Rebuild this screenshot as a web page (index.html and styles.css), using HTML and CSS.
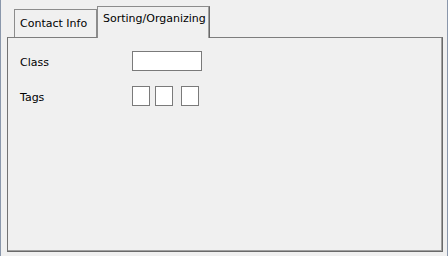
FILE: index.html
```html
<!DOCTYPE html>
<html>
<head>
<meta charset="utf-8">
<link rel="stylesheet" href="styles.css">
</head>
<body>
<div class="window">
  <div class="tabs">
    <div class="tab">Contact Info</div>
    <div class="tab tab-active">Sorting/Organizing</div>
  </div>
  <div class="panel">
    <div class="form">
      <div class="label">Class</div>
      <div class="field"><div class="box box-wide"></div></div>
      <div class="label">Tags</div>
      <div class="field tags">
        <div class="box box-tag"></div>
        <div class="box box-tag"></div>
        <div class="box box-tag box-last"></div>
      </div>
    </div>
  </div>
</div>
</body>
</html>
```
FILE: styles.css
```css
html, body {
  margin: 0;
  padding: 0;
  background: #f0f0f0;
}
body {
  font-family: "DejaVu Sans", sans-serif;
  font-size: 11px;
  color: #000;
}
.window {
  width: 448px;
  height: 256px;
  box-sizing: border-box;
  border-left: 1px solid #8a97ab;
  border-right: 1px solid #8a97ab;
  padding: 6px 0 0 6px;
}
.tabs {
  display: flex;
  align-items: flex-end;
  padding-left: 7px;
  height: 31px;
  position: relative;
  z-index: 2;
}
.tab {
  box-sizing: border-box;
  width: 83px;
  height: 28px;
  border: 1px solid #8c8c8c;
  border-bottom: none;
  padding: 7px 0 0 5px;
  line-height: 13px;
  white-space: nowrap;
  background: #f0f0f0;
}
.tab-active {
  width: 113px;
  height: 32px;
  margin-bottom: -1px;
  padding-top: 5px;
  border-right: 1px solid #696969;
  box-shadow: inset -1px 0 0 #a0a0a0;
}
.panel {
  box-sizing: border-box;
  width: 436px;
  height: 215px;
  border-top: 1px solid #7d7d7d;
  border-left: 1px solid #727272;
  border-right: 1px solid #696969;
  border-bottom: 1px solid #696969;
  box-shadow: inset -1px -1px 0 #a0a0a0;
  padding: 13px 0 0 12px;
}
.form {
  display: grid;
  grid-template-columns: 112px auto;
  row-gap: 15px;
  align-items: start;
}
.label {
  line-height: 13px;
  padding-top: 5px;
}
.field {
  display: flex;
}
.box {
  box-sizing: border-box;
  height: 20px;
  background: #fff;
  border: 1px solid #7a7a7a;
}
.box-wide {
  width: 70px;
}
.box-tag {
  width: 18px;
  margin-right: 5px;
}
.box-tag.box-last {
  margin-left: 3px;
  margin-right: 0;
}
```
